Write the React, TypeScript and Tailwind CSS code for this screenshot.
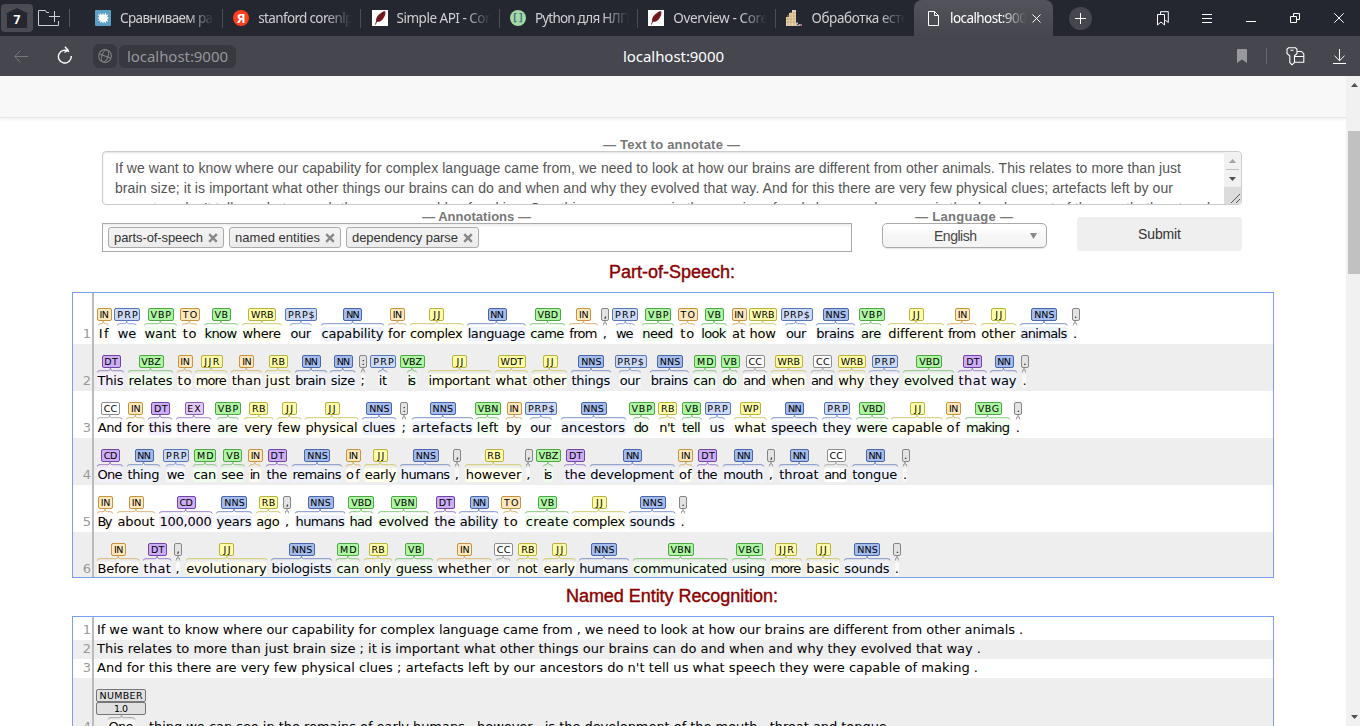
import { useLayoutEffect, useRef, type ReactNode } from "react";

/** Single-line text whose tracking is adjusted so that it spans `w` pixels. */
function Fit({ w, children, className = "" }: { w: number; children: string; className?: string }) {
  const ref = useRef<HTMLSpanElement>(null);
  useLayoutEffect(() => {
    const el = ref.current;
    if (!el) return;
    el.style.letterSpacing = "0px";
    const natural = el.getBoundingClientRect().width;
    const gaps = Math.max(1, children.length - 1);
    const ls = (w - natural) / gaps;
    el.style.letterSpacing = `${ls}px`;
    el.style.marginRight = `${-ls}px`;
  }, [w, children]);
  return (
    <span ref={ref} className={`inline-block shrink-0 whitespace-pre ${className}`}>
      {children}
    </span>
  );
}

type Style = { tag: string; hl: string; arc: string };
const BLUE: Style = { tag: "bg-[#a4bced] border-[#4a65a8]", hl: "bg-[#edf2fc]", arc: "#7d93c8" };
const PALE: Style = { tag: "bg-[#ccdaf6] border-[#5877b8]", hl: "bg-[#f5f8fd]", arc: "#8ba3d6" };
const GREEN: Style = { tag: "bg-[#adf6a2] border-[#4ea644]", hl: "bg-[#effdec]", arc: "#84c97c" };
const YELLOW: Style = { tag: "bg-[#fffda8] border-[#b9b23c]", hl: "bg-[#ffffec]", arc: "#d0ca69" };
const ORANGE: Style = { tag: "bg-[#ffe8be] border-[#c9923c]", hl: "bg-[#fffbf4]", arc: "#dbb474" };
const PURPLE: Style = { tag: "bg-[#ccadf6] border-[#7045a8]", hl: "bg-[#f5effd]", arc: "#a07fce" };
const LILAC: Style = { tag: "bg-[#e4cbf6] border-[#8a5bb5]", hl: "bg-[#faf5fe]", arc: "#a985c9" };
const GREY: Style = { tag: "bg-[#e3e3e3] border-[#858585]", hl: "bg-[#f9f9f9]", arc: "#a5a5a5" };
const WHITE: Style = { tag: "bg-white border-[#8d8d8d]", hl: "bg-white", arc: "#b0b0b0" };

const TAGS: Record<string, [number, Style]> = {
  IN: [15, ORANGE], TO: [20, ORANGE],
  PRP: [26, PALE], PRP$: [32, PALE],
  VB: [19, GREEN], VBP: [26, GREEN], VBD: [26, GREEN], VBZ: [25, GREEN], VBN: [26, GREEN], VBG: [27, GREEN], MD: [22, GREEN],
  WRB: [28, YELLOW], JJ: [15, YELLOW], JJR: [22, YELLOW], RB: [19, YELLOW], WDT: [28, YELLOW], WP: [21, YELLOW],
  NN: [19, BLUE], NNS: [26, BLUE],
  DT: [19, PURPLE], CD: [19, PURPLE], EX: [19, LILAC],
  CC: [19, WHITE],
  ",": [8, GREY], ".": [8, GREY], ":": [8, GREY],
};

type Tok = [string, string, number, number];
const S: Tok[][] = [
  [["If","IN",98.3,109],["we","PRP",117.3,136.7],["want","VBP",144,176.7],["to","TO",182.3,197],["know","VB",204,237.7],["where","WRB",242,281.7],["our","PRP$",290,311.7],["capability","NN",321,384],["for","IN",387.7,406.3],["complex","JJ",409.7,463.3],["language","NN",467.3,526],["came","VBD",530,565],["from","IN",569,598],[",",",",603,607],["we","PRP",615.7,634.3],["need","VBP",642,674],["to","TO",680,695],["look","VB",701,727],["at","IN",731.7,745.7],["how","WRB",749.3,776.7],["our","PRP$",785.7,807],["brains","NNS",816,855],["are","VBP",860.7,882],["different","JJ",888,944],["from","IN",947.7,977],["other","JJ",981,1016],["animals","NNS",1020.3,1068],[".",".",1073.3,1077.3]],
  [["This","DT",97,124],["relates","VBZ",128,173],["to","IN",177,192],["more","JJR",195.3,227.3],["than","IN",231.3,261.7],["just","RB",265,290.7],["brain","NN",294.7,326.7],["size","NN",330.3,355.7],[";",":",360.7,364.7],["it","PRP",378.3,387.7],["is","VBZ",407,416.7],["important","JJ",428,491],["what","WDT",495,527.7],["other","JJ",532.3,567],["things","NNS",571,611],["our","PRP$",619.3,641],["brains","NNS",650.3,689],["can","MD",693,716.7],["do","VB",722,737.7],["and","CC",743,766.7],["when","WRB",771,806],["and","CC",810.7,834.3],["why","WRB",838,865.3],["they","PRP",869.3,899.7],["evolved","VBD",903.7,954.7],["that","DT",958.3,987],["way","NN",990.3,1017.3],[".",".",1022.7,1026.7]],
  [["And","CC",97.3,122.7],["for","IN",126,144.7],["this","DT",148.3,172.3],["there","EX",176,211.3],["are","VBP",216.7,238.3],["very","RB",243.7,273],["few","JJ",277,301.3],["physical","JJ",305,358.3],["clues","NNS",362,396],[";",":",401.7,405.7],["artefacts","NNS",411.7,473],["left","VBN",476.3,499],["by","IN",505.7,522],["our","PRP$",530,551.7],["ancestors","NNS",560.7,625.7],["do","VBP",633.3,649.3],["n't","RB",659,675.7],["tell","VB",681.7,701.3],["us","PRP",709.3,725.3],["what","WP",734,766.7],["speech","NN",771,818],["they","PRP",822.3,852],["were","VBD",856,888.3],["capable","JJ",891.7,943.3],["of","IN",946.3,960.7],["making","VBG",965.7,1010.7],[".",".",1016,1020]],
  [["One","CD",97,123],["thing","NN",127,160],["we","PRP",166.3,185.3],["can","MD",193,216.7],["see","VB",220.7,244.3],["in","IN",249.3,260.7],["the","DT",266,287.7],["remains","NNS",292,342],["of","IN",345.7,360.3],["early","JJ",364.3,396.7],["humans","NNS",400.3,450.7],[",",",",455,459],["however","RB",465.3,522],[",",",",526.5,530.5],["is","VBZ",543.3,553],["the","DT",564.3,586.3],["development","NN",590,674.7],["of","IN",678.7,692.3],["the","DT",697,718.3],["mouth","NN",723,764],[",",",",769,773],["throat","NN",779,819.3],["and","CC",824,847.7],["tongue","NN",852,898],[".",".",903.3,907.3]],
  [["By","IN",97,113],["about","IN",117,155],["100,000","CD",159,212.3],["years","NNS",216,252],["ago","RB",255.7,280.3],[",",",",285,289],["humans","NNS",295,345.3],["had","VBD",349,373],["evolved","VBN",378.3,429.3],["the","DT",434,456],["ability","NN",459.3,498.7],["to","TO",503.3,518.3],["create","VB",525.3,569],["complex","JJ",572.3,625.7],["sounds","NNS",629.3,675.7],[".",".",680.7,684.7]],
  [["Before","IN",97,139.3],["that","DT",143,171.3],[",",",",175.7,179.7],["evolutionary","JJ",185.7,267.3],["biologists","NNS",271,332],["can","MD",336,359.7],["only","RB",363.7,391.7],["guess","VB",395.3,433.3],["whether","IN",437,491.7],["or","CC",496,510.3],["not","RB",516.7,538.3],["early","JJ",543,575.7],["humans","NNS",579,629],["communicated","VBN",633,728],["using","VBG",731.7,765.7],["more","JJR",770.3,802],["basic","JJ",806,840],["sounds","NNS",844,890.3],[".",".",895,899]],
];

function Bracket({ w, h = 6, color }: { w: number; h?: number; color: string }) {
  const m = w / 2;
  const r = Math.min(3, w / 3);
  return (
    <svg width={w} height={h} className="block shrink-0 overflow-visible" fill="none" stroke={color}>
      <path d={`M0.3 4.5 Q0.3 2.7 ${r} 2.7 H${m - 2} Q${m} 2.7 ${m} 0 Q${m} 2.7 ${m + 2} 2.7 H${w - r} Q${w - 0.3} 2.7 ${w - 0.3} 4.5`} />
    </svg>
  );
}

function Token({ tok, gap }: { tok: Tok; gap: number }) {
  const [word, tag, x0, x1] = tok;
  const [tw, st] = TAGS[tag];
  const w = x1 - x0;
  const punct = tw === 8;
  return (
    <div className="flex shrink-0 flex-col items-center" style={{ width: w, marginLeft: gap }}>
      <div className={`ml-px flex h-[13px] shrink-0 items-center justify-center rounded-[2px] border ${st.tag}`} style={{ width: tw }}>
        {punct ? (
          <span className="text-[10px] leading-[11px]">{word === ";" ? ":" : tag}</span>
        ) : (
          <Fit w={tag === "JJ" ? 7 : tag === "JJR" ? 15 : tw - 5.5} className="text-[9.5px] leading-[11px]">{tag}</Fit>
        )}
      </div>
      <Bracket w={w} color={st.arc} />
      <div className={`flex h-[14px] w-full items-center justify-center rounded-[3px] ${st.hl}`}>
        {punct ? <span className="text-[13px] leading-[14px]">{word}</span> : <Fit w={w - 1} className="text-[13px] leading-[14px]">{word}</Fit>}
      </div>
    </div>
  );
}

function Row({ n, children, className }: { n: number; children: ReactNode; className: string }) {
  return (
    <div className={`flex shrink-0 items-stretch ${className}`}>
      <div className="flex w-[21px] shrink-0 items-end justify-end border-r-2 border-[#bbb] text-[13px] leading-[14px] text-[#999]">
        <span className="w-[20px] pr-px pb-[3px] text-right">{n}</span>
      </div>
      {children}
    </div>
  );
}

function Legend({ w, children }: { w: number; children: string }) {
  return (
    <div className="flex h-[15px] justify-center pr-px text-[13px] leading-[15px] font-bold text-[#777]">
      <Fit w={w}>{children}</Fit>
    </div>
  );
}

function Chip({ w, children }: { w: number; children: string }) {
  return (
    <div className="flex h-[21px] items-center gap-[5px] rounded-[3px] border border-[#aaa] bg-linear-to-b from-[#f4f4f4] to-[#ebebeb] px-[5px] text-[13px] leading-4 text-[#333]">
      <Fit w={w}>{children}</Fit>
      <svg width="10" height="10" viewBox="0 0 10 10" stroke="#888" strokeWidth="2.4"><path d="M1.2 1.2 8.8 8.8M8.8 1.2 1.2 8.8" /></svg>
    </div>
  );
}

function Feather() {
  return (
    <svg width="16" height="16" viewBox="0 0 16 16">
      <rect width="16" height="16" fill="#fff" />
      <path d="M3 14.5 4.2 11C3.6 8 6 4.5 9 3 10.5 1.2 13 .8 13.3 1.5 14 4 12.5 7 11 9 9.5 11.2 7 12 5 11.8L3.7 14.7Z" fill="#7a1a1e" />
      <path d="M4.5 12 11.5 3" stroke="#4a0c10" strokeWidth=".7" />
    </svg>
  );
}

const TABS: { text: string; w: number; icon: ReactNode }[] = [
  { text: "Сравниваем ра", w: 93, icon: (
    <svg width="16" height="16" viewBox="0 0 16 16"><rect width="16" height="16" rx="1" fill="#5b9fc4" /><path d="M8 3 9 5 11 2.5 11 5 13.5 4.5 12 6.5 14 8 12 9 13.5 11.5 11 11 11 13.5 9 11.5 8 13.5 7 11.5 5 13 5.5 10.5 3 11 4.5 9 2.5 8 4.5 7 2.5 4.5 5 5 4.5 2.5 7 5Z" fill="#fff" /></svg>) },
  { text: "stanford corenlp", w: 95, icon: (
    <span className="flex size-4 items-center justify-center rounded-full bg-[#fc3f1d] text-[13px] leading-4 font-bold text-white">Я</span>) },
  { text: "Simple API - Cor", w: 94, icon: <Feather /> },
  { text: "Python для НЛП", w: 95, icon: (
    <span className="flex size-4 items-center justify-center rounded-full bg-[#a3d9a5] pb-0.5 text-[10px] leading-4 font-bold text-[#4a6a80]">[ ]</span>) },
  { text: "Overview - Core", w: 95, icon: <Feather /> },
  { text: "Обработка есте", w: 97, icon: (
    <svg width="16" height="16" viewBox="0 0 16 16"><path d="M0 16V7H3V3H6V0H10V16Z" fill="#ddd6c2" /><path d="M2 5V16M5 2V16M8 1V16M0 9H10M0 12H10M3 6H10M6 3H10" stroke="#d9a55a" strokeWidth=".8" /><path d="M10 12.5H12V14H16V16H10Z" fill="#b8b3b3" /><path d="M11 14.5h2M14 15h2" stroke="#7b3b45" /></svg>) },
];

const LINES: [string, number][] = [
  ["If we want to know where our capability for complex language came from , we need to look at how our brains are different from other animals .", 926],
  ["This relates to more than just brain size ; it is important what other things our brains can do and when and why they evolved that way .", 884],
  ["And for this there are very few physical clues ; artefacts left by our ancestors do n't tell us what speech they were capable of making .", 881],
];

export default function App() {
  return (
    <div className="flex h-[726px] w-[1360px] flex-col overflow-hidden bg-white font-['Liberation_Sans',sans-serif] text-black">
      {/* tab strip */}
      <header className="flex h-9 shrink-0 items-center bg-[#242730] font-['Noto_Sans',sans-serif] text-[13px] text-[#d0d0d3]">
        <div className="ml-px flex h-7 w-8 shrink-0 items-center justify-center rounded bg-[#4b4b54]">
          <div className="flex h-5 w-6 items-center justify-center bg-[#24272f] pt-1 text-[12px] leading-4 font-bold text-white [clip-path:polygon(50%_0,100%_30%,92%_30%,92%_100%,8%_100%,8%_30%,0_30%)]">7</div>
        </div>
        <svg className="ml-[5px] shrink-0" width="22" height="17" viewBox="0 0 22 17" fill="none" stroke="#d0d0d3"><path d="M11 2.5H8.500L7.500.5H.5V15.500H20.500V11M11 6.500H22M16.500 1V12" /></svg>
        <div className="ml-[9px] h-[18px] w-px shrink-0 bg-[#55575f]" />
        <div className="ml-[15px] flex w-[829px] shrink-0">
          {TABS.map((t, i) => (
            <div key={i} className="flex w-[138.3px] shrink-0 items-center">
              <div className="ml-2.5 flex shrink-0">{t.icon}</div>
              <div className="ml-[9px] w-[94px] overflow-hidden [mask-image:linear-gradient(to_right,black_72%,transparent)]">
                <Fit w={t.w} className="text-[13.5px] leading-5">{t.text}</Fit>
              </div>
              {i < 5 && <div className="ml-2 h-[19px] w-px bg-[#4b4d55]" />}
            </div>
          ))}
        </div>
        <div className="flex h-full w-[139px] shrink-0 items-center rounded-t-lg bg-linear-to-b from-[#53535c] to-[#46464f] pl-[14px] text-white">
          <svg width="11" height="15" viewBox="0 0 11 15" fill="none" stroke="#fff"><path d="M.5.5H6.500L10.500 4.500V14.500H.5ZM6.500.5V4.500H10.500" /></svg>
          <div className="ml-[11px] w-[77px] overflow-hidden [mask-image:linear-gradient(to_right,black_65%,transparent)]">
            <Fit w={84} className="text-[13.5px] leading-5">localhost:9000</Fit>
          </div>
          <svg className="ml-[5px]" width="9" height="9" viewBox="0 0 9 9" stroke="#fff"><path d="M.5.5 8.500 8.500M8.500.5.5 8.500" /></svg>
        </div>
        <div className="ml-4 flex size-[23px] shrink-0 items-center justify-center rounded-full bg-[#46464f]">
          <svg width="11" height="11" viewBox="0 0 11 11" stroke="#fff"><path d="M5.500 0V11M0 5.500H11" /></svg>
        </div>
        <svg className="ml-[64px] shrink-0" width="13" height="15" viewBox="0 0 13 15" fill="none" stroke="#fff"><path d="M1.500 3.500H8.500V14L5 11 1.500 14ZM4.500 3.500V.7H12.300V11.500L9 9" /></svg>
        <svg className="ml-[33px] shrink-0" width="10" height="9" viewBox="0 0 10 9" stroke="#fff"><path d="M0 .5H10M0 4.500H10M0 8.500H10" /></svg>
        <svg className="ml-[34px] mt-2 shrink-0" width="10" height="2" stroke="#fff"><path d="M0 .5H10" /></svg>
        <svg className="ml-[34px] shrink-0" width="10" height="10" viewBox="0 0 10 10" fill="none" stroke="#fff"><path d="M.5 3.500H6.500V9.500H.5ZM3.500 3.500V.5H9.500V6.500H6.500" /></svg>
        <svg className="ml-[34px] shrink-0" width="10" height="10" viewBox="0 0 10 10" stroke="#fff"><path d="M.3.3 9.700 9.700M9.700.3.3 9.700" /></svg>
      </header>

      {/* address bar */}
      <div className="flex h-10 shrink-0 items-center bg-[#46464f] font-['Noto_Sans',sans-serif]">
        <svg className="ml-[14px] shrink-0" width="14" height="13" viewBox="0 0 14 13" fill="none" stroke="#77777e"><path d="M14 6.500H.8M6.500.5.7 6.500 6.500 12.500" /></svg>
        <svg className="ml-[29px] -mt-0.5 shrink-0" width="16" height="18" viewBox="0 0 16 18" fill="none" stroke="#fff" strokeWidth="1.4"><path d="M12 5.800A6.400 6.400 0 1 0 14.200 10M8 .8 11 4.200 7.500 6.500" /></svg>
        <div className="ml-5 flex size-6 items-center justify-center rounded-md bg-[#373840]">
          <svg width="14" height="14" viewBox="0 0 14 14" fill="none" stroke="#85858c" transform="rotate(20)"><circle cx="7" cy="7" r="6.400" /><ellipse cx="7" cy="7" rx="3" ry="6.400" /><path d="M.6 7H13.400" /></svg>
        </div>
        <div className="ml-0.5 flex h-[23px] w-[117px] items-center rounded-md bg-[#373840] pl-2 text-[#96969c]">
          <Fit w={101} className="text-[15px] leading-5">localhost:9000</Fit>
        </div>
        <div className="ml-[387px] w-[101px] text-white"><Fit w={101} className="text-[15px] leading-5">localhost:9000</Fit></div>
        <svg className="ml-[513px] shrink-0" width="10" height="14"><path d="M0 1Q0 0 1 0H9Q10 0 10 1V14L5 10.500 0 14Z" fill="#98989d" /></svg>
        <div className="ml-[19px] h-4 w-px bg-[#66666e]" />
        <svg className="ml-[19px] shrink-0" width="19" height="19" viewBox="0 0 19 19" fill="none" stroke="#fff" strokeWidth="1.1"><path d="M2.500.8H9.500L11 2.300V6.500L8.500 8.800V15.500L6 17.800 3.800 15.500V8.800L1 6.500V2.300ZM4.500 3.300H7.500M11 4.500H15.500L17.800 7V15.300H8.700M8.700 9.500H17.800" /></svg>
        <svg className="ml-7 shrink-0" width="13" height="15" viewBox="0 0 13 15" fill="none" stroke="#fff"><path d="M6.500 0V11.500M1.500 6.800 6.500 11.700 11.500 6.800M0 14.500H13" /></svg>
      </div>

      <div className="flex min-h-0 flex-1">
        <main className="flex w-[1346px] shrink-0 flex-col overflow-hidden">
          <div className="h-[42px] shrink-0 border-b border-[#e7e7e7] bg-[#f8f8f8] shadow-[0_1px_4px_rgba(0,0,0,0.08)]" />

          <form className="ml-[102px] flex w-[1140px] shrink-0 flex-col pt-[19px]">
            <div className="flex flex-col">
              <Legend w={137}>— Text to annotate —</Legend>
              <div className="-mt-px flex h-[54px] overflow-hidden rounded-[4px] border border-[#ccc] shadow-[inset_0_1px_2px_rgba(0,0,0,0.12)]">
                <div className="flex w-[1121px] flex-col items-start pt-1.5 pl-3 text-[14px] leading-5 text-[#555]">
                  <Fit w={1066}>If we want to know where our capability for complex language came from, we need to look at how our brains are different from other animals. This relates to more than just</Fit>
                  <Fit w={1058}>brain size; it is important what other things our brains can do and when and why they evolved that way. And for this there are very few physical clues; artefacts left by our</Fit>
                  <Fit w={1095}>ancestors don't tell us what speech they were capable of making. One thing we can see in the remains of early humans, however, is the development of the mouth, throat and</Fit>
                </div>
                <div className="flex w-[17px] flex-col bg-[#f1f1f1]">
                  <div className="flex h-[17px] items-center justify-center"><svg width="7" height="4"><path d="M0 4 3.500 0 7 4Z" fill="#a3a3a3" /></svg></div>
                  <div className="mx-0.5 h-px bg-[#c1c1c1]" />
                  <div className="flex h-[17px] items-center justify-center"><svg width="7" height="4"><path d="M0 0 3.500 4 7 0Z" fill="#505050" /></svg></div>
                  <div className="flex flex-1 items-end justify-end bg-[#dcdcdc] p-px"><svg width="9" height="9" stroke="#555"><path d="M0 9 9 0M5 9 9 5" /></svg></div>
                </div>
              </div>
            </div>
            <div className="mt-1 flex items-start">
              <div className="w-[750px]">
                <Legend w={109}>— Annotations —</Legend>
                <div className="-mt-px flex h-[29px] items-start gap-[5px] border border-[#aaa] bg-linear-to-b from-[#eee] from-[1%] to-white to-[15%] pt-[3px] pl-[5px]">
                  <Chip w={89}>parts-of-speech</Chip>
                  <Chip w={85}>named entities</Chip>
                  <Chip w={106}>dependency parse</Chip>
                </div>
              </div>
              <div className="ml-[30px] w-[165px]">
                <Legend w={98}>— Language —</Legend>
                <div className="-mt-px flex h-[25px] items-center rounded-[5px] border border-[#aaa] bg-linear-to-b from-white from-[20%] via-[#f6f6f6] via-50% to-[#f4f4f4] pr-[9px] text-[14px] text-[#444] shadow-[0_1px_1px_rgba(0,0,0,0.1)]">
                  <div className="flex flex-1 justify-center pt-px pr-0.5"><Fit w={43}>English</Fit></div>
                  <svg width="7" height="6"><path d="M0 0H7L3.500 6Z" fill="#888" /></svg>
                </div>
              </div>
              <div className="mt-[8px] ml-[30px] flex h-[34px] w-[165px] items-center justify-center rounded-[4px] bg-[#efefef] text-[14px] text-[#333]"><Fit w={43}>Submit</Fit></div>
            </div>
          </form>

          <h2 className="mt-2.5 flex h-5 shrink-0 items-center justify-center pr-0.5 text-[18px] leading-5 text-[#8b0000] [-webkit-text-stroke:0.4px_#8b0000]"><Fit w={126}>Part-of-Speech:</Fit></h2>

          <section className="mt-2.5 ml-[72px] flex h-[286px] w-[1202px] shrink-0 flex-col overflow-hidden border border-[#7b9ef5] font-['DejaVu_Sans',sans-serif]">
            {S.map((toks, i) => (
              <Row key={i} n={i + 1} className={i === 0 ? "h-[51px]" : i % 2 ? "h-[47px] bg-[#eee]" : "h-[47px]"}>
                <div className={`ml-0.5 flex items-start ${i === 0 ? "pt-[15px]" : "pt-[11px]"}`}>
                  {toks.map((t, j) => (
                    <Token key={j} tok={t} gap={t[2] - (j ? toks[j - 1][3] : 96)} />
                  ))}
                </div>
              </Row>
            ))}
          </section>

          <h2 className="mt-2 flex h-5 shrink-0 items-center justify-center pr-0.5 text-[18px] leading-5 text-[#8b0000] [-webkit-text-stroke:0.4px_#8b0000]"><Fit w={212}>Named Entity Recognition:</Fit></h2>

          <section className="mt-2.5 ml-[72px] flex h-[286px] w-[1202px] shrink-0 flex-col border border-[#7b9ef5] font-['DejaVu_Sans',sans-serif]">
            {LINES.map(([text, w], i) => (
              <Row key={i} n={i + 1} className={i === 0 ? "h-[23px]" : i === 1 ? "h-[19px] bg-[#eee]" : "h-[19px]"}>
                <div className="ml-[3px] flex items-end pb-[3px]"><Fit w={w} className="text-[13px] leading-[14px]">{text}</Fit></div>
              </Row>
            ))}
            <Row n={4} className="h-[59px] bg-[#eee]">
              <div className="ml-0.5 flex items-end pb-[3px]">
                <div className="flex w-[50px] flex-col items-center">
                  <div className="flex h-[13px] w-full items-center justify-center rounded-[2px] border border-[#777] bg-[#e0e0e0]"><Fit w={43} className="text-[9.5px] leading-[11px]">NUMBER</Fit></div>
                  <div className="flex h-[13px] w-full items-center justify-center rounded-[2px] border border-[#777] bg-[#e0e0e0]"><Fit w={14} className="text-[9.5px] leading-[11px]">1.0</Fit></div>
                  <Bracket w={27} h={5} color="#a5a5a5" />
                  <div className="flex h-[14px] w-[27px] items-center justify-center rounded-[3px] bg-[#f9f9f9]"><Fit w={25} className="text-[13px] leading-[14px]">One</Fit></div>
                </div>
                <Fit w={746} className="ml-[3px] text-[13px] leading-[14px]">thing we can see in the remains of early humans , however , is the development of the mouth , throat and tongue .</Fit>
              </div>
            </Row>
          </section>
        </main>

        {/* page scrollbar */}
        <aside className="flex w-[14px] shrink-0 flex-col items-end bg-[#f1f1f1]">
          <div className="flex h-[55px] w-3 justify-center pt-[7px]"><svg width="7" height="4"><path d="M0 4 3.500 0 7 4Z" fill="#505050" /></svg></div>
          <div className="h-[143px] w-3 bg-[#c1c1c1]" />
          <div className="mt-auto flex h-[11px] w-3 justify-center"><svg width="7" height="4"><path d="M0 0 3.500 4 7 0Z" fill="#505050" /></svg></div>
        </aside>
      </div>
    </div>
  );
}
